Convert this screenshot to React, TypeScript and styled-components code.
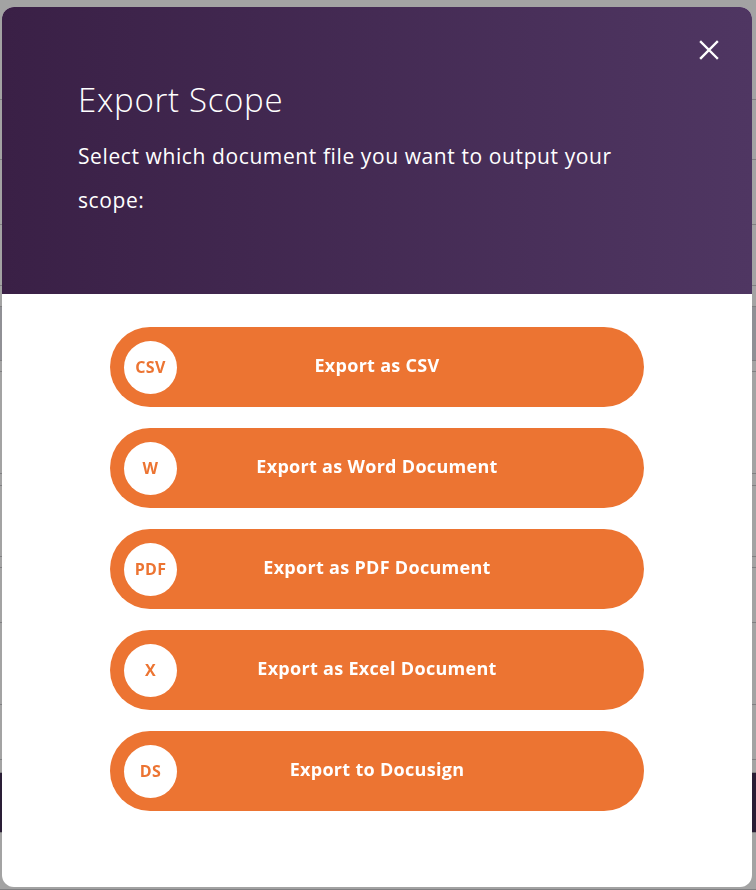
import React from 'react';
import styled, { createGlobalStyle } from 'styled-components';

const GlobalStyle = createGlobalStyle`
  html, body {
    margin: 0;
    padding: 0;
    background: #ffffff;
  }
  body {
    font-family: 'Open Sans', 'Liberation Sans', sans-serif;
  }
`;

interface ExportOption {
  badge: string;
  label: string;
}

const options: ExportOption[] = [
  { badge: 'CSV', label: 'Export as CSV' },
  { badge: 'W', label: 'Export as Word Document' },
  { badge: 'PDF', label: 'Export as PDF Document' },
  { badge: 'X', label: 'Export as Excel Document' },
  { badge: 'DS', label: 'Export to Docusign' },
];

// faint page rows that show through the overlay
const rowHeights = [100, 60, 65, 61, 21, 54, 11, 102, 12, 71, 11, 55, 82, 55, 13, 60, 57];
const rowTones: Array<'line' | 'band' | 'dark'> = [
  'line', 'line', 'line', 'line', 'line', 'band', 'line', 'line', 'line', 'line', 'line', 'line', 'line', 'line', 'line', 'dark', 'line',
];

const Page = styled.div`
  width: 756px;
  height: 890px;
  overflow: hidden;
  position: relative;
  background: #ffffff;
`;

const PageRow = styled.div<{ $tone: 'line' | 'band' | 'dark' }>`
  border-bottom: 1px solid #c8c8cc;
  background: ${p => (p.$tone === 'band' ? '#e2e2ea' : p.$tone === 'dark' ? '#432f55' : '#ffffff')};
  box-sizing: border-box;
`;

const Overlay = styled.div`
  position: fixed;
  inset: 0;
  background: rgba(0, 0, 0, 0.36);
  display: flex;
  align-items: flex-start;
  justify-content: flex-start;
  padding: 7px 0 0 2px;
`;

const Modal = styled.div`
  width: 750px;
  height: 880px;
  background: #ffffff;
  border-radius: 12px;
  overflow: hidden;
  display: flex;
  flex-direction: column;
`;

const Header = styled.div`
  position: relative;
  height: 287px;
  box-sizing: border-box;
  padding: 73px 80px 0 76px;
  background: linear-gradient(90deg, #3a2046 0%, #4f3662 100%);
  color: #ffffff;
`;

const Title = styled.h1`
  margin: 0;
  font-family: 'Open Sans', 'Liberation Sans', sans-serif;
  font-weight: 300;
  font-size: 33px;
  line-height: 40px;
  letter-spacing: 0.7px;
`;

const Subtitle = styled.p`
  margin: 14px 0 0;
  font-family: 'Open Sans', 'Liberation Sans', sans-serif;
  font-weight: 400;
  font-size: 21px;
  line-height: 44px;
  letter-spacing: 0.6px;
  max-width: 560px;
`;

const CloseButton = styled.button`
  position: absolute;
  top: 33px;
  right: 33px;
  width: 20px;
  height: 20px;
  padding: 0;
  border: none;
  background: transparent;
  cursor: pointer;
  display: flex;
  align-items: center;
  justify-content: center;
`;

const Body = styled.div`
  flex: 1;
  display: flex;
  flex-direction: column;
  align-items: center;
  gap: 21px;
  padding-top: 33px;
`;

const OptionButton = styled.button`
  width: 534px;
  height: 80px;
  border: none;
  border-radius: 40px;
  background: #ec7432;
  display: grid;
  grid-template-columns: 53px 1fr 53px;
  align-items: center;
  padding: 0 14px;
  box-sizing: border-box;
  cursor: pointer;
`;

const Badge = styled.span`
  width: 53px;
  height: 53px;
  border-radius: 50%;
  background: #ffffff;
  color: #ec7432;
  display: flex;
  align-items: center;
  justify-content: center;
  font-family: 'Open Sans', 'Liberation Sans', sans-serif;
  font-weight: 700;
  font-size: 16px;
  letter-spacing: 0.3px;
`;

const Label = styled.span`
  color: #ffffff;
  text-align: center;
  font-family: 'Open Sans', 'Liberation Sans', sans-serif;
  font-weight: 700;
  font-size: 18px;
  letter-spacing: 0.3px;
  margin-top: -4px;
`;

const CloseIcon = () => (
  <svg width="20" height="20" viewBox="0 0 20 20">
    <path d="M2 2 L18 18 M18 2 L2 18" stroke="#ffffff" strokeWidth="2.4" strokeLinecap="square" />
  </svg>
);

export default function App() {
  return (
    <>
      <GlobalStyle />
      <Page>
        {rowHeights.map((h, i) => (
          <PageRow key={i} $tone={rowTones[i]} style={{ height: h }} />
        ))}
        <Overlay>
          <Modal>
            <Header>
              <Title>Export Scope</Title>
              <Subtitle>Select which document file you want to output your scope:</Subtitle>
              <CloseButton aria-label="Close">
                <CloseIcon />
              </CloseButton>
            </Header>
            <Body>
              {options.map(o => (
                <OptionButton key={o.badge}>
                  <Badge>{o.badge}</Badge>
                  <Label>{o.label}</Label>
                  <span />
                </OptionButton>
              ))}
            </Body>
          </Modal>
        </Overlay>
      </Page>
    </>
  );
}
